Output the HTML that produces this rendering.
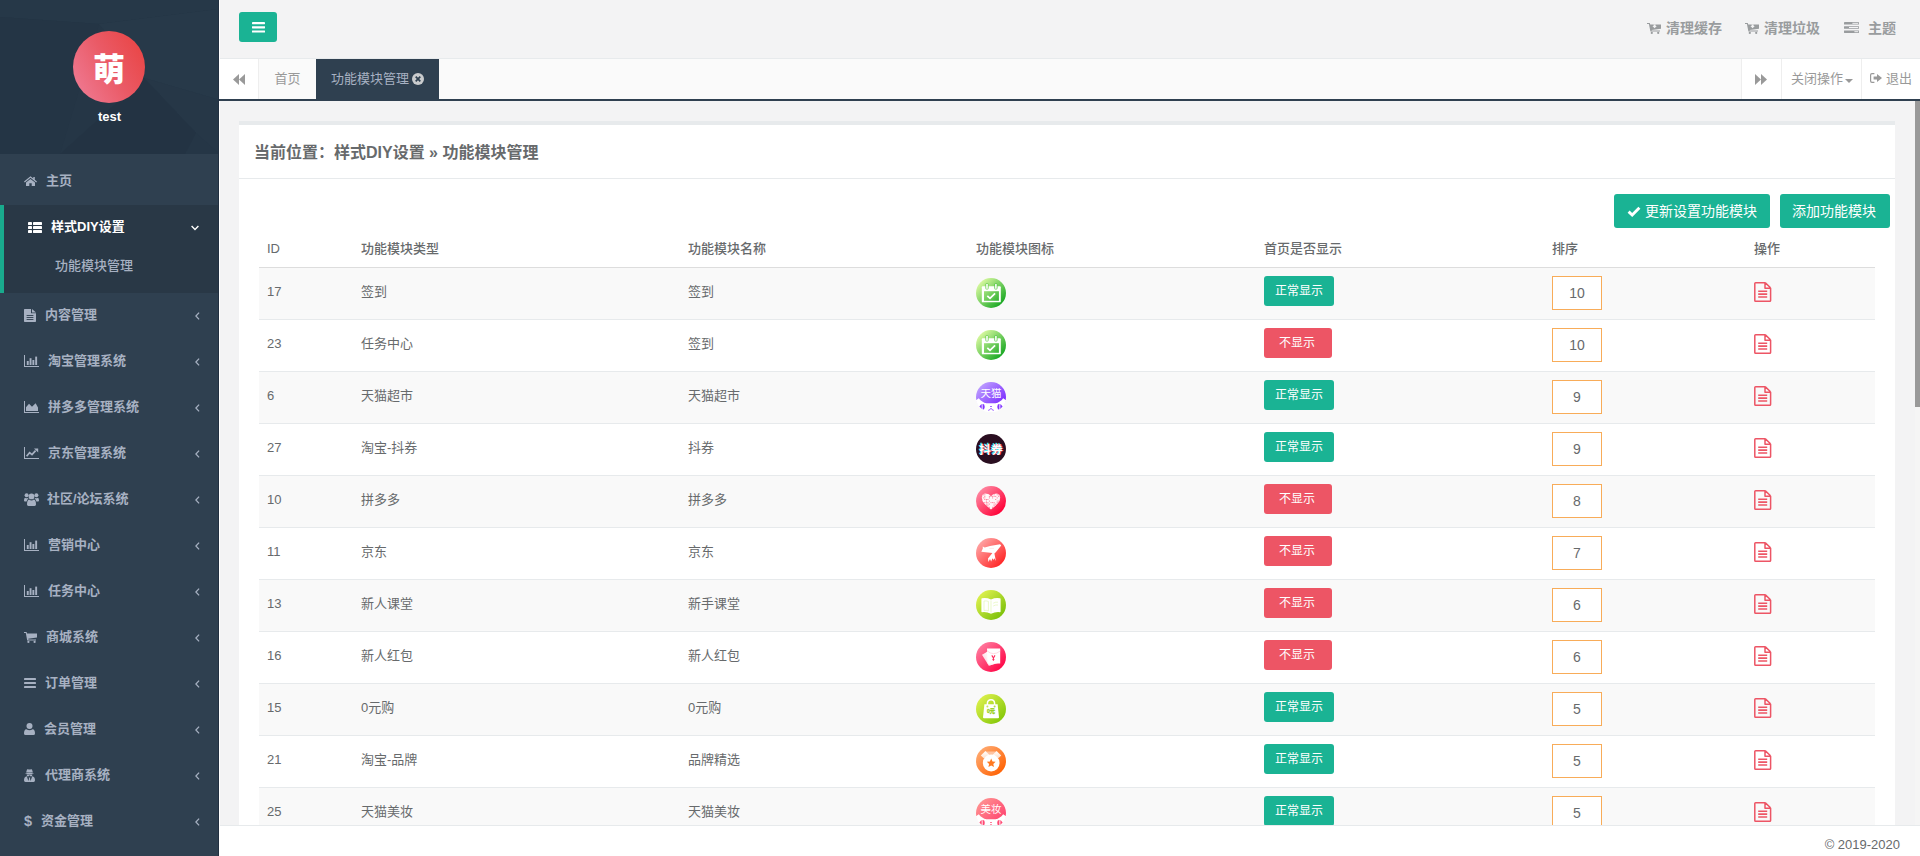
<!DOCTYPE html>
<html lang="zh-CN">
<head>
<meta charset="utf-8">
<title>功能模块管理</title>
<style>
*{box-sizing:border-box}
html,body{margin:0;padding:0}
body{width:1920px;height:856px;overflow:hidden;position:relative;background:#f3f3f4;color:#676a6c;font-family:"Liberation Sans","Noto Sans CJK SC",sans-serif;font-size:13px;line-height:1.42857}
a{color:inherit;text-decoration:none}
ul{list-style:none;margin:0;padding:0}
svg{display:block}
/* sidebar */
#side{position:absolute;left:0;top:0;width:219px;height:856px;background:#2f4050;overflow:hidden}
#side:after{content:"";position:absolute;left:218px;top:0;width:1px;height:856px;background:#223041}
#strip{position:absolute;left:219px;top:0;width:1px;height:856px;background:#fff}
#navhead{position:absolute;left:0;top:0;width:220px;height:154px;background:#253646;overflow:hidden}
#navhead svg.bg{position:absolute;left:0;top:0}
#avatar{position:absolute;left:73px;top:31px;width:72px;height:72px;border-radius:50%;background:linear-gradient(60deg,#ef7890 10%,#ea5a66 52%,#e94545 92%);color:#fff;font-weight:900;font-size:32px;line-height:72px;padding-top:3px;text-align:center}
#uname{position:absolute;left:0;top:108px;width:219px;text-align:center;color:#fff;font-weight:700;font-size:13px;line-height:18px}
#menu{position:absolute;left:0;top:159px;width:220px}
#menu li.it{height:46px;position:relative;color:#a7b1c2;font-weight:700;font-size:13px}
#menu li.it .ic{position:absolute;left:24px;top:-1px;height:46px;display:flex;align-items:center;fill:#a7b1c2}
.dl{font-size:14.5px;font-weight:700;line-height:1;font-family:"Liberation Sans",sans-serif;position:relative;top:0.5px}
#menu li.it .tx{position:absolute;top:12px;line-height:20px;white-space:nowrap}
#menu li.it .ar{position:absolute;left:194.6px;top:18.5px;stroke:#a7b1c2;fill:none}
#menu li.act{height:88px;background:#293846;border-left:4px solid #19aa8d;position:relative;color:#fff;font-weight:700}
#menu li.act .ic{position:absolute;left:24px;top:-1px;height:46px;display:flex;align-items:center;fill:#fff}
#menu li.act .tx{position:absolute;left:47px;top:12px;line-height:20px;color:#fff}
#menu li.act .ar{position:absolute;left:187px;top:19.5px;stroke:#fff;fill:none}
#menu li.act .sub{position:absolute;left:51px;top:51px;line-height:20px;color:#a7b1c2;font-weight:500}
/* top bar */
#top{position:absolute;left:220px;top:0;width:1700px;height:59px;background:#f3f3f4;border-bottom:1px solid #e7eaec}
#burger{position:absolute;left:19px;top:12px;width:38px;height:30px;background:#1ab394;border-radius:3px}
#burger svg{position:absolute;left:13px;top:9.5px}
#toplinks{position:absolute;left:0;top:0;width:1700px;height:56px}
#toplinks a{position:absolute;top:18px;line-height:20px;font-size:14px;font-weight:700;color:#999c9e;white-space:nowrap}
#toplinks svg{position:absolute;fill:#999c9e}
/* tabs */
#tabs{position:absolute;left:220px;top:59px;width:1700px;height:42px;background:#fafafa;border-bottom:2px solid #2f4050}
#tabs:before{content:"";position:absolute;left:-1px;bottom:-2px;width:1px;height:2px;background:#2f4050}
#tabs .cell{position:absolute;top:0;height:40px;line-height:40px;font-size:13px;color:#999;text-align:center;white-space:nowrap}
#tabs svg{fill:#999}
/* content */
#content{position:absolute;left:220px;top:101px;width:1695px;height:724px;overflow:hidden;background:#f3f3f4}
#strack{position:absolute;left:1915px;top:101px;width:5px;height:724px;background:#f5f5f5}
#sbar{position:absolute;left:1915px;top:101px;width:5px;height:306px;background:#999}
#ibox{position:absolute;left:19px;top:20px;width:1656px;height:760px;background:#fff;border-top:4px solid #e7eaec}
#ititle{height:54px;border-bottom:1px solid #e7eaec;padding:15px 15px 0 15px;font-size:16px;font-weight:700;line-height:26px;color:#676a6c}
#btns{position:absolute;top:69px;right:5px;height:34px}
.btn{display:inline-block;background:#1ab394;color:#fff;border-radius:3px;font-size:13px;line-height:20px;white-space:nowrap}
#tbl{position:absolute;left:20px;top:107px;width:1616px;border-collapse:collapse;table-layout:fixed}
#tbl th{height:35px;text-align:left;padding:1px 8px 0;font-weight:500;border-bottom:1px solid #ddd;vertical-align:middle;font-size:13px}
#tbl td{height:52px;padding:0 8px 1px;border-top:1px solid #e7eaec;vertical-align:middle;font-size:13px;position:relative}
#tbl tr.o td{background:#f9f9f9}
.bd{position:absolute;left:8px;top:8px;height:30px;border-radius:3px;color:#fff;font-size:12px;line-height:30px;text-align:center}
.bd.g{width:70px;background:#1ab394}
.bd.r{width:68px;background:#ed5565;padding-right:2px}
.srt{position:absolute;left:8px;top:8px;width:50px;height:34px;border:1px solid #f8ac59;background:#fff;text-align:center;font-size:14px;line-height:32px;color:#676a6c}
.doc{position:absolute;left:8px;top:14px}
.cir{position:absolute;left:8px;top:10px;width:30px;height:30px}
/* footer */
#foot{position:absolute;left:220px;top:825px;width:1700px;height:31px;background:#fff;border-top:1px solid #e7eaec;text-align:right;padding:10px 20px 0 0;font-size:13px;line-height:18px;color:#676a6c}
</style>
</head>
<body>
<div id="side">
<div id="navhead">
<svg class="bg" width="220" height="154" viewBox="0 0 220 154"><polygon points="0,17 99,24 220,9 220,0 0,0" fill="#263848"/><polygon points="99,24 220,9 220,100 144,78" fill="#273949"/><polygon points="144,78 220,100 220,154 196,133" fill="#263747"/><polygon points="144,78 196,133 185,154 60,154" fill="#233343"/><polygon points="0,17 99,24 60,154 0,154" fill="#243545"/></svg>
<div id="avatar">萌</div>
<div id="uname">test</div>
</div>
<ul id="menu">
<li class="it"><span class="ic"><svg width="13" height="10" viewBox="0 0 13 10"><path d="M6.5 0.2L0 5.6L0.8 6.5L6.5 1.8L12.2 6.5L13 5.6L10.8 3.8V0.9H9.3V2.5Z"/><path d="M6.5 2.9L2 6.6V10H5.3V7.2H7.7V10H11V6.6Z"/></svg></span><span class="tx" style="left:46px">主页</span></li>
<li class="act"><span class="ic"><svg width="14" height="11" viewBox="0 0 14 11"><rect x="0" y="0" width="4" height="3" rx=".4"/><rect x="5" y="0" width="9" height="3" rx=".4"/><rect x="0" y="4" width="4" height="3" rx=".4"/><rect x="5" y="4" width="9" height="3" rx=".4"/><rect x="0" y="8" width="4" height="3" rx=".4"/><rect x="5" y="8" width="9" height="3" rx=".4"/></svg></span><span class="tx">样式DIY设置</span><svg class="ar" width="8" height="6" viewBox="0 0 8 6"><path d="M0.6 1L4 4.4L7.4 1" stroke-width="1.4"/></svg><span class="sub">功能模块管理</span></li>
<li class="it"><span class="ic"><svg width="12" height="13" viewBox="0 0 12 13"><path d="M0.7 0H7V4.3H12V12.3Q12 13 11.3 13H0.7Q0 13 0 12.3V0.7Q0 0 0.7 0Z"/><path d="M8 0L12 3.4H8Z"/><rect x="2.6" y="6" width="6.8" height=".9" fill="#2f4050"/><rect x="2.6" y="8" width="6.8" height=".9" fill="#2f4050"/><rect x="2.6" y="10" width="6.8" height=".9" fill="#2f4050"/></svg></span><span class="tx" style="left:45px">内容管理</span><svg class="ar" width="5" height="8" viewBox="0 0 5 8"><path d="M4.1 0.6L0.9 4L4.1 7.4" stroke-width="1.25"/></svg></li>
<li class="it"><span class="ic"><svg class="bc" width="15" height="12" viewBox="0 0 15 12"><path d="M0 0H1V11H15V12H0Z"/><rect x="2.8" y="6" width="1.9" height="4"/><rect x="5.6" y="3.2" width="1.9" height="6.8"/><rect x="8.4" y="5" width="1.9" height="5"/><rect x="11.2" y="1.6" width="1.9" height="8.4"/></svg></span><span class="tx" style="left:48px">淘宝管理系统</span><svg class="ar" width="5" height="8" viewBox="0 0 5 8"><path d="M4.1 0.6L0.9 4L4.1 7.4" stroke-width="1.25"/></svg></li>
<li class="it"><span class="ic"><svg class="bc" width="15" height="12" viewBox="0 0 15 12"><path d="M0 0H1V11H15V12H0Z"/><path d="M2 10V6.3L5 2.8L8 5.8L11.6 2.2L14 6.6V10Z"/></svg></span><span class="tx" style="left:48px">拼多多管理系统</span><svg class="ar" width="5" height="8" viewBox="0 0 5 8"><path d="M4.1 0.6L0.9 4L4.1 7.4" stroke-width="1.25"/></svg></li>
<li class="it"><span class="ic"><svg class="bc" width="15" height="12" viewBox="0 0 15 12"><path d="M0 0H1V11H15V12H0Z"/><path d="M2.6 9.2L5.6 5.6L8 7.6L11.6 3.6" fill="none" stroke="#a7b1c2" stroke-width="1.7"/><path d="M10 1.4H14.2V5.6Z"/></svg></span><span class="tx" style="left:48px">京东管理系统</span><svg class="ar" width="5" height="8" viewBox="0 0 5 8"><path d="M4.1 0.6L0.9 4L4.1 7.4" stroke-width="1.25"/></svg></li>
<li class="it"><span class="ic"><svg width="15" height="13" viewBox="0 0 15 13"><circle cx="7.5" cy="3.4" r="2.9"/><path d="M3 11.6Q3 7 5.1 6.6Q7.5 8.5 9.9 6.6Q12 7 12 11.6Q12 13 10.6 13H4.4Q3 13 3 11.6Z"/><circle cx="2.6" cy="2.3" r="2"/><circle cx="12.4" cy="2.3" r="2"/><path d="M0 7.6Q0 5 1.2 4.8Q2.6 5.8 4 5L4.4 5.6Q3 6.6 2.6 8.6H0.9Q0 8.6 0 7.6Z"/><path d="M15 7.6Q15 5 13.8 4.8Q12.4 5.8 11 5L10.6 5.6Q12 6.6 12.4 8.6H14.1Q15 8.6 15 7.6Z"/></svg></span><span class="tx" style="left:47px">社区/论坛系统</span><svg class="ar" width="5" height="8" viewBox="0 0 5 8"><path d="M4.1 0.6L0.9 4L4.1 7.4" stroke-width="1.25"/></svg></li>
<li class="it"><span class="ic"><svg class="bc" width="15" height="12" viewBox="0 0 15 12"><path d="M0 0H1V11H15V12H0Z"/><rect x="2.8" y="6" width="1.9" height="4"/><rect x="5.6" y="3.2" width="1.9" height="6.8"/><rect x="8.4" y="5" width="1.9" height="5"/><rect x="11.2" y="1.6" width="1.9" height="8.4"/></svg></span><span class="tx" style="left:48px">营销中心</span><svg class="ar" width="5" height="8" viewBox="0 0 5 8"><path d="M4.1 0.6L0.9 4L4.1 7.4" stroke-width="1.25"/></svg></li>
<li class="it"><span class="ic"><svg class="bc" width="15" height="12" viewBox="0 0 15 12"><path d="M0 0H1V11H15V12H0Z"/><rect x="2.8" y="6" width="1.9" height="4"/><rect x="5.6" y="3.2" width="1.9" height="6.8"/><rect x="8.4" y="5" width="1.9" height="5"/><rect x="11.2" y="1.6" width="1.9" height="8.4"/></svg></span><span class="tx" style="left:48px">任务中心</span><svg class="ar" width="5" height="8" viewBox="0 0 5 8"><path d="M4.1 0.6L0.9 4L4.1 7.4" stroke-width="1.25"/></svg></li>
<li class="it"><span class="ic"><svg width="13" height="11" viewBox="0 0 13 11"><path d="M0 0H2.6L3 1.4H13V5.6L4.2 6.7L4.4 7.6H12V8.6H3.2L1.8 1H0Z"/><circle cx="4.4" cy="9.9" r="1.1"/><circle cx="10.6" cy="9.9" r="1.1"/></svg></span><span class="tx" style="left:46px">商城系统</span><svg class="ar" width="5" height="8" viewBox="0 0 5 8"><path d="M4.1 0.6L0.9 4L4.1 7.4" stroke-width="1.25"/></svg></li>
<li class="it"><span class="ic"><svg width="12" height="10" viewBox="0 0 12 10"><rect y="0" width="12" height="2" rx=".4"/><rect y="4" width="12" height="2" rx=".4"/><rect y="8" width="12" height="2" rx=".4"/></svg></span><span class="tx" style="left:45px">订单管理</span><svg class="ar" width="5" height="8" viewBox="0 0 5 8"><path d="M4.1 0.6L0.9 4L4.1 7.4" stroke-width="1.25"/></svg></li>
<li class="it"><span class="ic"><svg width="11" height="12" viewBox="0 0 11 12"><circle cx="5.5" cy="3" r="3"/><path d="M0 10.4Q0 6.6 2.4 6.3Q5.5 8.4 8.6 6.3Q11 6.6 11 10.4Q11 12 9.4 12H1.6Q0 12 0 10.4Z"/></svg></span><span class="tx" style="left:44px">会员管理</span><svg class="ar" width="5" height="8" viewBox="0 0 5 8"><path d="M4.1 0.6L0.9 4L4.1 7.4" stroke-width="1.25"/></svg></li>
<li class="it"><span class="ic"><svg width="11" height="13" viewBox="0 0 11 13"><path d="M3 0.6Q3.4 0 4 0.3Q5.5 0.9 7 0.3Q7.6 0 8 0.6L8.9 3.4H2.1Z"/><path d="M0.8 4.6Q5.5 3 10.2 4.6Q5.5 5.9 0.8 4.6Z"/><path d="M2.6 5.6H8.4Q8.2 7.6 7.2 7.6Q6.2 7.6 5.9 6.6H5.1Q4.8 7.6 3.8 7.6Q2.8 7.6 2.6 5.6Z"/><path d="M2.8 7.2L4.4 12L5 9.4L4.7 8.6H6.3L6 9.4L6.6 12L8.2 7.2Q11 7.8 11 11.2Q11 13 9.6 13H1.4Q0 13 0 11.2Q0 7.8 2.8 7.2Z"/></svg></span><span class="tx" style="left:45px">代理商系统</span><svg class="ar" width="5" height="8" viewBox="0 0 5 8"><path d="M4.1 0.6L0.9 4L4.1 7.4" stroke-width="1.25"/></svg></li>
<li class="it"><span class="ic"><span class="dl">$</span></span><span class="tx" style="left:41px">资金管理</span><svg class="ar" width="5" height="8" viewBox="0 0 5 8"><path d="M4.1 0.6L0.9 4L4.1 7.4" stroke-width="1.25"/></svg></li>
</ul>
</div>

<div id="strip"></div>
<div id="top">
<a id="burger"><svg width="13" height="11" viewBox="0 0 13 11" fill="#fff"><rect y="0" width="13" height="2.2" rx=".4"/><rect y="4.2" width="13" height="2.2" rx=".4"/><rect y="8.4" width="13" height="2.2" rx=".4"/></svg></a>
<div id="toplinks">
<svg width="14" height="11" viewBox="0 0 14 11" style="left:1427px;top:23px"><path d="M0 0H2.8L3.2 1.4H14V5.8L4.6 6.9L4.8 7.6H13V8.6H3.4L1.9 1H0Z"/><path d="M6.6 1.4V3H5.4L7.6 5.2L9.8 3H8.6V1.4Z" fill="#f3f3f4"/><circle cx="4.8" cy="9.9" r="1.1"/><circle cx="11.2" cy="9.9" r="1.1"/></svg><a style="left:1446px">清理缓存</a>
<svg width="14" height="11" viewBox="0 0 14 11" style="left:1525px;top:23px"><path d="M0 0H2.8L3.2 1.4H14V5.8L4.6 6.9L4.8 7.6H13V8.6H3.4L1.9 1H0Z"/><path d="M6.6 1.4V3H5.4L7.6 5.2L9.8 3H8.6V1.4Z" fill="#f3f3f4"/><circle cx="4.8" cy="9.9" r="1.1"/><circle cx="11.2" cy="9.9" r="1.1"/></svg><a style="left:1544px">清理垃圾</a>
<svg width="15" height="11" viewBox="0 0 15 11" style="left:1624px;top:22px"><rect x="0" y="0" width="15" height="2.6" rx=".4"/><rect x="0" y="4.2" width="15" height="2.6" rx=".4"/><rect x="0" y="8.4" width="15" height="2.6" rx=".4"/><rect x="8.4" y=".8" width="5.8" height="1" fill="#f3f3f4"/><rect x="5" y="5" width="9.2" height="1" fill="#f3f3f4"/><rect x="10.4" y="9.2" width="3.8" height="1" fill="#f3f3f4"/></svg><a style="left:1648px">主题</a>
</div>
</div>

<div id="tabs">
<div class="cell" style="left:0;width:39px;background:#fff;border-right:1px solid #eee"><svg width="12" height="11" viewBox="0 0 12 11" style="position:absolute;left:13px;top:15px"><path d="M6 0V11L0 5.5Z"/><path d="M12 0V11L6 5.5Z"/></svg></div>
<div class="cell" style="left:39px;width:57px;background:#fafafa">首页</div>
<div class="cell" style="left:96px;width:123px;background:#2f4050;color:#a7b1c2;text-align:left;padding-left:15px">功能模块管理<svg width="12" height="12" viewBox="0 0 12 12" style="position:absolute;left:96px;top:14px"><circle cx="6" cy="6" r="6" fill="#c9cbcd"/><path d="M3.7 3.7L8.3 8.3M8.3 3.7L3.7 8.3" stroke="#2f4050" stroke-width="1.7"/></svg></div>
<div class="cell" style="left:1521px;width:40px;background:#fff;border-left:1px solid #eee"><svg width="12" height="11" viewBox="0 0 12 11" style="position:absolute;left:13px;top:15px"><path d="M0 0V11L6 5.5Z"/><path d="M6 0V11L12 5.5Z"/></svg></div>
<div class="cell" style="left:1561px;width:80px;background:#fff;border-left:1px solid #eee;text-align:left;padding-left:9px">关闭操作<svg width="8" height="4" viewBox="0 0 8 4" style="position:absolute;left:63px;top:20px"><path d="M0 0H8L4 4Z"/></svg></div>
<div class="cell" style="left:1641px;width:59px;background:#fff;border-left:1px solid #eee;text-align:left;padding-left:24px"><svg width="12" height="10" viewBox="0 0 12 10" style="position:absolute;left:8px;top:14px"><path d="M4.4 0H2Q0 0 0 2V8Q0 10 2 10H4.4V8.8H2Q1.2 8.8 1.2 8V2Q1.2 1.2 2 1.2H4.4Z"/><path d="M3.6 3.4H7V1L12 5L7 9V6.6H3.6Z"/></svg>退出</div>
</div>

<div id="content">
<div id="ibox">
<div id="ititle">当前位置：样式DIY设置 » 功能模块管理</div>
<div id="btns"><a class="btn" style="position:absolute;right:120px;top:0;width:156px;height:34px;padding:7px 0 0 13px;font-size:14px"><svg width="14" height="11" viewBox="0 0 14 11" style="display:inline-block;vertical-align:-1px;margin-right:4px"><path d="M1.6 5.6L5.2 9L12.4 1.8" fill="none" stroke="#fff" stroke-width="2.9"/></svg>更新设置功能模块</a><a class="btn" style="position:absolute;right:0;top:0;width:110px;height:34px;padding:7px 0 0 12px;font-size:14px">添加功能模块</a></div>
<table id="tbl">
<colgroup><col style="width:94px"><col style="width:327px"><col style="width:288px"><col style="width:288px"><col style="width:288px"><col style="width:202px"><col style="width:129px"></colgroup>
<thead><tr><th style="font-weight:400">ID</th><th>功能模块类型</th><th>功能模块名称</th><th>功能模块图标</th><th>首页是否显示</th><th>排序</th><th>操作</th></tr></thead>
<tbody>
<tr class="o"><td>17</td><td>签到</td><td>签到</td><td><svg class="cir" width="30" height="30" viewBox="0 0 30 30"><defs><linearGradient id="g1" gradientUnits="userSpaceOnUse" x1="4" y1="4" x2="26" y2="26"><stop offset="0" stop-color="#d9f9a0"/><stop offset="1" stop-color="#17a722"/></linearGradient></defs><circle cx="15" cy="15" r="15" fill="url(#g1)"/><path d="M6.6 8.3H23.9Q24.8 8.3 24.8 9.2V23.4Q24.8 24.3 23.9 24.3H6.6Q5.8 24.3 5.8 23.4V9.2Q5.8 8.3 6.6 8.3Z" fill="#fff"/><rect x="8" y="13.2" width="14.9" height="9.6" fill="url(#g1)"/><rect x="9.4" y="5" width="3.2" height="6.6" rx="1.6" fill="#6fcf52"/><rect x="18.3" y="5" width="3.2" height="6.6" rx="1.6" fill="#5cc94a"/><rect x="10.2" y="5.7" width="1.6" height="5.3" rx=".8" fill="#fff"/><rect x="19.1" y="5.7" width="1.6" height="5.3" rx=".8" fill="#fff"/><path d="M11.3 17.8L14 20.4L19.1 15.3" fill="none" stroke="#fff" stroke-width="1.7"/></svg></td><td><span class="bd g">正常显示</span></td><td><span class="srt">10</span></td><td><svg class="doc" width="18" height="20" viewBox="0 0 18 20"><path d="M1.6 0.8H11V6.2H16.6V18.4Q16.6 19.2 15.8 19.2H1.6Q0.8 19.2 0.8 18.4V1.6Q0.8 0.8 1.6 0.8ZM11.4 0.9L16.5 5.8" fill="none" stroke="#ed5565" stroke-width="1.5" stroke-linejoin="round"/><path d="M4.2 9.2H13.2M4.2 12.1H13.2M4.2 15H13.2" stroke="#ed5565" stroke-width="1.6"/></svg></td></tr>
<tr><td>23</td><td>任务中心</td><td>签到</td><td><svg class="cir" width="30" height="30" viewBox="0 0 30 30"><defs><linearGradient id="g2" gradientUnits="userSpaceOnUse" x1="4" y1="4" x2="26" y2="26"><stop offset="0" stop-color="#d9f9a0"/><stop offset="1" stop-color="#17a722"/></linearGradient></defs><circle cx="15" cy="15" r="15" fill="url(#g2)"/><path d="M6.6 8.3H23.9Q24.8 8.3 24.8 9.2V23.4Q24.8 24.3 23.9 24.3H6.6Q5.8 24.3 5.8 23.4V9.2Q5.8 8.3 6.6 8.3Z" fill="#fff"/><rect x="8" y="13.2" width="14.9" height="9.6" fill="url(#g2)"/><rect x="9.4" y="5" width="3.2" height="6.6" rx="1.6" fill="#6fcf52"/><rect x="18.3" y="5" width="3.2" height="6.6" rx="1.6" fill="#5cc94a"/><rect x="10.2" y="5.7" width="1.6" height="5.3" rx=".8" fill="#fff"/><rect x="19.1" y="5.7" width="1.6" height="5.3" rx=".8" fill="#fff"/><path d="M11.3 17.8L14 20.4L19.1 15.3" fill="none" stroke="#fff" stroke-width="1.7"/></svg></td><td><span class="bd r">不显示</span></td><td><span class="srt">10</span></td><td><svg class="doc" width="18" height="20" viewBox="0 0 18 20"><path d="M1.6 0.8H11V6.2H16.6V18.4Q16.6 19.2 15.8 19.2H1.6Q0.8 19.2 0.8 18.4V1.6Q0.8 0.8 1.6 0.8ZM11.4 0.9L16.5 5.8" fill="none" stroke="#ed5565" stroke-width="1.5" stroke-linejoin="round"/><path d="M4.2 9.2H13.2M4.2 12.1H13.2M4.2 15H13.2" stroke="#ed5565" stroke-width="1.6"/></svg></td></tr>
<tr class="o"><td>6</td><td>天猫超市</td><td>天猫超市</td><td><svg class="cir" width="30" height="30" viewBox="0 0 30 30"><defs><linearGradient id="g3" gradientUnits="userSpaceOnUse" x1="4" y1="4" x2="26" y2="26"><stop offset="0" stop-color="#bb9cff"/><stop offset="1" stop-color="#7622ff"/></linearGradient></defs><circle cx="15" cy="15" r="15" fill="url(#g3)"/><clipPath id="cp3"><circle cx="15" cy="15" r="15.5"/></clipPath><path clip-path="url(#cp3)" d="M-1 19L2.8 16.2Q6 20.4 10.5 21.2H19.5Q24 20.4 27.2 16.2L31 19V31H-1Z" fill="#fff"/><path d="M3.4 24.4Q5.6 21.2 8.2 22.4Q9.4 25 8 27.6Q5.6 27.4 3.4 24.4Z" fill="#8236ff"/><path d="M26.6 24.4Q24.4 21.2 21.8 22.4Q20.6 25 22 27.6Q24.4 27.4 26.6 24.4Z" fill="#8236ff"/><rect x="5.7" y="22.2" width=".9" height="5.4" fill="#fff"/><rect x="23.4" y="22.2" width=".9" height="5.4" fill="#fff"/><rect x="14.2" y="24" width="1.6" height=".9" fill="#8236ff"/><path d="M12.2 28.4Q14 28.2 15 26.2Q16 28.2 17.8 28.4" fill="none" stroke="#8236ff" stroke-width=".8"/><text x="15" y="14.7" text-anchor="middle" font-size="10.5" fill="#fff" font-weight="400" font-family="Liberation Sans,Noto Sans CJK SC,sans-serif">天猫</text></svg></td><td><span class="bd g">正常显示</span></td><td><span class="srt">9</span></td><td><svg class="doc" width="18" height="20" viewBox="0 0 18 20"><path d="M1.6 0.8H11V6.2H16.6V18.4Q16.6 19.2 15.8 19.2H1.6Q0.8 19.2 0.8 18.4V1.6Q0.8 0.8 1.6 0.8ZM11.4 0.9L16.5 5.8" fill="none" stroke="#ed5565" stroke-width="1.5" stroke-linejoin="round"/><path d="M4.2 9.2H13.2M4.2 12.1H13.2M4.2 15H13.2" stroke="#ed5565" stroke-width="1.6"/></svg></td></tr>
<tr><td>27</td><td>淘宝-抖券</td><td>抖券</td><td><svg class="cir" width="30" height="30" viewBox="0 0 30 30"><circle cx="15" cy="15" r="15" fill="#2a0e20"/><g font-size="11.8" font-weight="700" text-anchor="middle" font-family="Liberation Sans,Noto Sans CJK SC,sans-serif"><text x="14.3" y="19.2" fill="#3ff0f0">抖券</text><text x="15.7" y="20.4" fill="#ff2d55">抖券</text><text x="15" y="19.8" fill="#fff">抖券</text></g></svg></td><td><span class="bd g">正常显示</span></td><td><span class="srt">9</span></td><td><svg class="doc" width="18" height="20" viewBox="0 0 18 20"><path d="M1.6 0.8H11V6.2H16.6V18.4Q16.6 19.2 15.8 19.2H1.6Q0.8 19.2 0.8 18.4V1.6Q0.8 0.8 1.6 0.8ZM11.4 0.9L16.5 5.8" fill="none" stroke="#ed5565" stroke-width="1.5" stroke-linejoin="round"/><path d="M4.2 9.2H13.2M4.2 12.1H13.2M4.2 15H13.2" stroke="#ed5565" stroke-width="1.6"/></svg></td></tr>
<tr class="o"><td>10</td><td>拼多多</td><td>拼多多</td><td><svg class="cir" width="30" height="30" viewBox="0 0 30 30"><defs><linearGradient id="g5" gradientUnits="userSpaceOnUse" x1="4" y1="4" x2="26" y2="26"><stop offset="0" stop-color="#ff86a0"/><stop offset="1" stop-color="#ff0036"/></linearGradient></defs><circle cx="15" cy="15" r="15" fill="url(#g5)"/><clipPath id="cp5"><path d="M15 23.4Q5.8 17.2 5.8 11.8Q5.8 7.4 10 7.4Q13.2 7.4 15 10.2Q16.8 7.4 20 7.4Q24.2 7.4 24.2 11.8Q24.2 17.2 15 23.4Z"/></clipPath><g clip-path="url(#cp5)"><rect x="5" y="6" width="20" height="18" fill="#fff" opacity=".96"/><g fill="#ff2d58" opacity=".6"><rect x="5.2" y="6.8" width="1" height="1"/><rect x="6.8" y="6.8" width="1" height="1"/><rect x="9.9" y="6.8" width="1" height="1"/><rect x="11.4" y="6.8" width="1" height="1"/><rect x="12.9" y="6.8" width="1" height="1"/><rect x="14.5" y="6.8" width="1" height="1"/><rect x="16.1" y="6.8" width="1" height="1"/><rect x="17.6" y="6.8" width="1" height="1"/><rect x="19.2" y="6.8" width="1" height="1"/><rect x="20.7" y="6.8" width="1" height="1"/><rect x="22.2" y="6.8" width="1" height="1"/><rect x="23.8" y="6.8" width="1" height="1"/><rect x="6.8" y="8.3" width="1" height="1"/><rect x="8.3" y="8.3" width="1" height="1"/><rect x="14.5" y="8.3" width="1" height="1"/><rect x="17.6" y="8.3" width="1" height="1"/><rect x="20.7" y="8.3" width="1" height="1"/><rect x="22.2" y="8.3" width="1" height="1"/><rect x="23.8" y="8.3" width="1" height="1"/><rect x="5.2" y="9.9" width="1" height="1"/><rect x="8.3" y="9.9" width="1" height="1"/><rect x="12.9" y="9.9" width="1" height="1"/><rect x="14.5" y="9.9" width="1" height="1"/><rect x="16.1" y="9.9" width="1" height="1"/><rect x="17.6" y="9.9" width="1" height="1"/><rect x="19.2" y="9.9" width="1" height="1"/><rect x="22.2" y="9.9" width="1" height="1"/><rect x="23.8" y="9.9" width="1" height="1"/><rect x="6.8" y="11.4" width="1" height="1"/><rect x="8.3" y="11.4" width="1" height="1"/><rect x="12.9" y="11.4" width="1" height="1"/><rect x="16.1" y="11.4" width="1" height="1"/><rect x="20.7" y="11.4" width="1" height="1"/><rect x="23.8" y="11.4" width="1" height="1"/><rect x="5.2" y="13.0" width="1" height="1"/><rect x="8.3" y="13.0" width="1" height="1"/><rect x="9.9" y="13.0" width="1" height="1"/><rect x="11.4" y="13.0" width="1" height="1"/><rect x="19.2" y="13.0" width="1" height="1"/><rect x="5.2" y="14.6" width="1" height="1"/><rect x="9.9" y="14.6" width="1" height="1"/><rect x="12.9" y="14.6" width="1" height="1"/><rect x="20.7" y="14.6" width="1" height="1"/><rect x="22.2" y="14.6" width="1" height="1"/><rect x="5.2" y="16.1" width="1" height="1"/><rect x="6.8" y="16.1" width="1" height="1"/><rect x="8.3" y="16.1" width="1" height="1"/><rect x="9.9" y="16.1" width="1" height="1"/><rect x="11.4" y="16.1" width="1" height="1"/><rect x="14.5" y="16.1" width="1" height="1"/><rect x="16.1" y="16.1" width="1" height="1"/><rect x="17.6" y="16.1" width="1" height="1"/><rect x="20.7" y="16.1" width="1" height="1"/><rect x="22.2" y="16.1" width="1" height="1"/><rect x="23.8" y="16.1" width="1" height="1"/><rect x="9.9" y="17.6" width="1" height="1"/><rect x="11.4" y="17.6" width="1" height="1"/><rect x="12.9" y="17.6" width="1" height="1"/><rect x="17.6" y="17.6" width="1" height="1"/><rect x="19.2" y="17.6" width="1" height="1"/><rect x="20.7" y="17.6" width="1" height="1"/><rect x="22.2" y="17.6" width="1" height="1"/><rect x="23.8" y="17.6" width="1" height="1"/><rect x="6.8" y="19.2" width="1" height="1"/><rect x="8.3" y="19.2" width="1" height="1"/><rect x="9.9" y="19.2" width="1" height="1"/><rect x="11.4" y="19.2" width="1" height="1"/><rect x="17.6" y="19.2" width="1" height="1"/><rect x="22.2" y="19.2" width="1" height="1"/><rect x="9.9" y="20.8" width="1" height="1"/><rect x="11.4" y="20.8" width="1" height="1"/><rect x="12.9" y="20.8" width="1" height="1"/><rect x="16.1" y="20.8" width="1" height="1"/><rect x="17.6" y="20.8" width="1" height="1"/><rect x="19.2" y="20.8" width="1" height="1"/><rect x="20.7" y="20.8" width="1" height="1"/><rect x="22.2" y="20.8" width="1" height="1"/><rect x="23.8" y="20.8" width="1" height="1"/><rect x="5.2" y="22.3" width="1" height="1"/><rect x="6.8" y="22.3" width="1" height="1"/><rect x="8.3" y="22.3" width="1" height="1"/><rect x="9.9" y="22.3" width="1" height="1"/><rect x="11.4" y="22.3" width="1" height="1"/><rect x="16.1" y="22.3" width="1" height="1"/><rect x="17.6" y="22.3" width="1" height="1"/><rect x="19.2" y="22.3" width="1" height="1"/><rect x="20.7" y="22.3" width="1" height="1"/><rect x="22.2" y="22.3" width="1" height="1"/></g></g></svg></td><td><span class="bd r">不显示</span></td><td><span class="srt">8</span></td><td><svg class="doc" width="18" height="20" viewBox="0 0 18 20"><path d="M1.6 0.8H11V6.2H16.6V18.4Q16.6 19.2 15.8 19.2H1.6Q0.8 19.2 0.8 18.4V1.6Q0.8 0.8 1.6 0.8ZM11.4 0.9L16.5 5.8" fill="none" stroke="#ed5565" stroke-width="1.5" stroke-linejoin="round"/><path d="M4.2 9.2H13.2M4.2 12.1H13.2M4.2 15H13.2" stroke="#ed5565" stroke-width="1.6"/></svg></td></tr>
<tr><td>11</td><td>京东</td><td>京东</td><td><svg class="cir" width="30" height="30" viewBox="0 0 30 30"><defs><linearGradient id="g6" gradientUnits="userSpaceOnUse" x1="4" y1="4" x2="26" y2="26"><stop offset="0" stop-color="#ffa3a3"/><stop offset="1" stop-color="#ff2626"/></linearGradient></defs><circle cx="15" cy="15" r="15" fill="url(#g6)"/><path d="M6.7 8.5L8.7 9.5L14 8L24 6.3L25.2 7.5L19.8 14.2L18.4 15.6L19.9 23L18.4 20.2L17.4 22L16.4 20.2L15.2 23.6L14 21L12.4 24L12 20.4L16.4 14.9L5.3 13.8L6.8 10.6Z" fill="#fff"/><path d="M13.2 10.4H18" stroke="#ffd2d2" stroke-width=".5"/></svg></td><td><span class="bd r">不显示</span></td><td><span class="srt">7</span></td><td><svg class="doc" width="18" height="20" viewBox="0 0 18 20"><path d="M1.6 0.8H11V6.2H16.6V18.4Q16.6 19.2 15.8 19.2H1.6Q0.8 19.2 0.8 18.4V1.6Q0.8 0.8 1.6 0.8ZM11.4 0.9L16.5 5.8" fill="none" stroke="#ed5565" stroke-width="1.5" stroke-linejoin="round"/><path d="M4.2 9.2H13.2M4.2 12.1H13.2M4.2 15H13.2" stroke="#ed5565" stroke-width="1.6"/></svg></td></tr>
<tr class="o"><td>13</td><td>新人课堂</td><td>新手课堂</td><td><svg class="cir" width="30" height="30" viewBox="0 0 30 30"><defs><linearGradient id="g7" gradientUnits="userSpaceOnUse" x1="4" y1="4" x2="26" y2="26"><stop offset="0" stop-color="#dcf04e"/><stop offset="1" stop-color="#7dc10a"/></linearGradient></defs><circle cx="15" cy="15" r="15" fill="url(#g7)"/><path d="M6 8.2Q10.6 7.4 15 9.4Q19.4 7.4 24 8.2Q24.6 8.3 24.6 9V21.4Q24.6 22.2 24 22.2Q19.4 21.6 15 23.8Q10.6 21.6 6 22.2Q5.4 22.2 5.4 21.4V9Q5.4 8.3 6 8.2Z" fill="#fff"/><path d="M15 10.4V22.6M8 11V20.4Q10.6 20 12.4 21V11.4Q10.4 10.6 8 11ZM17.2 13.2Q19.6 11.8 22 12.2M17.2 16Q19.6 14.6 22 15" fill="none" stroke="#e3f6b4" stroke-width=".7"/></svg></td><td><span class="bd r">不显示</span></td><td><span class="srt">6</span></td><td><svg class="doc" width="18" height="20" viewBox="0 0 18 20"><path d="M1.6 0.8H11V6.2H16.6V18.4Q16.6 19.2 15.8 19.2H1.6Q0.8 19.2 0.8 18.4V1.6Q0.8 0.8 1.6 0.8ZM11.4 0.9L16.5 5.8" fill="none" stroke="#ed5565" stroke-width="1.5" stroke-linejoin="round"/><path d="M4.2 9.2H13.2M4.2 12.1H13.2M4.2 15H13.2" stroke="#ed5565" stroke-width="1.6"/></svg></td></tr>
<tr><td>16</td><td>新人红包</td><td>新人红包</td><td><svg class="cir" width="30" height="30" viewBox="0 0 30 30"><defs><linearGradient id="g8" gradientUnits="userSpaceOnUse" x1="4" y1="4" x2="26" y2="26"><stop offset="0" stop-color="#ff789c"/><stop offset="1" stop-color="#ff0848"/></linearGradient></defs><circle cx="15" cy="15" r="15" fill="url(#g8)"/><path d="M6 12.8L10.6 10.2L18 22L12.8 23.8Z" fill="#ffe4ec"/><path d="M8.4 12L12 8.8L22 21L13.6 23.4Z" fill="#fff0f4"/><path d="M11 6.4H24.2V21.4H11.6Z" fill="#fff"/><path d="M11 8.8Q17.4 14.4 24.2 9" fill="none" stroke="#ffd0dc" stroke-width=".8"/><path d="M15.8 13.4L17.4 16L19 13.4M17.4 16V18.4" fill="none" stroke="#ff2a5c" stroke-width="1.1"/><path d="M16 17.2L17.4 18.8L18.8 17.2Z" fill="#ff2a5c"/></svg></td><td><span class="bd r">不显示</span></td><td><span class="srt">6</span></td><td><svg class="doc" width="18" height="20" viewBox="0 0 18 20"><path d="M1.6 0.8H11V6.2H16.6V18.4Q16.6 19.2 15.8 19.2H1.6Q0.8 19.2 0.8 18.4V1.6Q0.8 0.8 1.6 0.8ZM11.4 0.9L16.5 5.8" fill="none" stroke="#ed5565" stroke-width="1.5" stroke-linejoin="round"/><path d="M4.2 9.2H13.2M4.2 12.1H13.2M4.2 15H13.2" stroke="#ed5565" stroke-width="1.6"/></svg></td></tr>
<tr class="o"><td>15</td><td>0元购</td><td>0元购</td><td><svg class="cir" width="30" height="30" viewBox="0 0 30 30"><defs><linearGradient id="g9" gradientUnits="userSpaceOnUse" x1="4" y1="4" x2="26" y2="26"><stop offset="0" stop-color="#daef4a"/><stop offset="1" stop-color="#86c80a"/></linearGradient></defs><circle cx="15" cy="15" r="15" fill="url(#g9)"/><path d="M11.4 11.4V9.6Q11.4 5.8 15 5.8Q18.6 5.8 18.6 9.6V11.4" fill="none" stroke="#fff" stroke-width="1.5"/><path d="M8.4 10.2H21.6L23 23.2Q23 24.2 22 24.2H8Q7 24.2 7 23.2Z" fill="#fff"/><circle cx="11.4" cy="12.4" r="1" fill="#c5e85a"/><circle cx="18.6" cy="12.4" r="1" fill="#b4df3c"/><text x="15" y="19.4" text-anchor="middle" font-size="5.2" font-weight="900" fill="#98d020" stroke="#98d020" stroke-width=".3" font-family="Liberation Sans,Noto Sans CJK SC,sans-serif">0元</text></svg></td><td><span class="bd g">正常显示</span></td><td><span class="srt">5</span></td><td><svg class="doc" width="18" height="20" viewBox="0 0 18 20"><path d="M1.6 0.8H11V6.2H16.6V18.4Q16.6 19.2 15.8 19.2H1.6Q0.8 19.2 0.8 18.4V1.6Q0.8 0.8 1.6 0.8ZM11.4 0.9L16.5 5.8" fill="none" stroke="#ed5565" stroke-width="1.5" stroke-linejoin="round"/><path d="M4.2 9.2H13.2M4.2 12.1H13.2M4.2 15H13.2" stroke="#ed5565" stroke-width="1.6"/></svg></td></tr>
<tr><td>21</td><td>淘宝-品牌</td><td>品牌精选</td><td><svg class="cir" width="30" height="30" viewBox="0 0 30 30"><defs><linearGradient id="g10" gradientUnits="userSpaceOnUse" x1="4" y1="4" x2="26" y2="26"><stop offset="0" stop-color="#ffa86e"/><stop offset="1" stop-color="#ff6305"/></linearGradient></defs><circle cx="15" cy="15" r="15" fill="url(#g10)"/><defs><linearGradient id="r10" x1="0" y1="0" x2="0" y2="1"><stop offset="0" stop-color="#fff"/><stop offset="1" stop-color="#fff" stop-opacity=".7"/></linearGradient></defs><path d="M9.6 5.4H20.4L17.4 9.4H12.6Z" fill="#ffc3a0"/><path d="M4.8 9.4L9.4 5L14 9.6L8 12.6Z" fill="url(#r10)"/><path d="M25.2 9.4L20.6 5L16 9.6L22 12.6Z" fill="url(#r10)"/><circle cx="15.2" cy="17" r="8.4" fill="#fff"/><path d="M15.2 12.6L16.5 15.5L19.6 15.8L17.3 17.9L18 21L15.2 19.4L12.4 21L13.1 17.9L10.8 15.8L13.9 15.5Z" fill="#ff7a22"/></svg></td><td><span class="bd g">正常显示</span></td><td><span class="srt">5</span></td><td><svg class="doc" width="18" height="20" viewBox="0 0 18 20"><path d="M1.6 0.8H11V6.2H16.6V18.4Q16.6 19.2 15.8 19.2H1.6Q0.8 19.2 0.8 18.4V1.6Q0.8 0.8 1.6 0.8ZM11.4 0.9L16.5 5.8" fill="none" stroke="#ed5565" stroke-width="1.5" stroke-linejoin="round"/><path d="M4.2 9.2H13.2M4.2 12.1H13.2M4.2 15H13.2" stroke="#ed5565" stroke-width="1.6"/></svg></td></tr>
<tr class="o"><td>25</td><td>天猫美妆</td><td>天猫美妆</td><td><svg class="cir" width="30" height="30" viewBox="0 0 30 30"><defs><linearGradient id="g11" gradientUnits="userSpaceOnUse" x1="4" y1="4" x2="26" y2="26"><stop offset="0" stop-color="#ff9090"/><stop offset="1" stop-color="#ff3e6e"/></linearGradient></defs><circle cx="15" cy="15" r="15" fill="url(#g11)"/><clipPath id="cp11"><circle cx="15" cy="15" r="15.5"/></clipPath><path clip-path="url(#cp11)" d="M-1 19L2.8 16.2Q6 20.4 10.5 21.2H19.5Q24 20.4 27.2 16.2L31 19V31H-1Z" fill="#fff"/><path d="M3.4 24.4Q5.6 21.2 8.2 22.4Q9.4 25 8 27.6Q5.6 27.4 3.4 24.4Z" fill="#ff4a74"/><path d="M26.6 24.4Q24.4 21.2 21.8 22.4Q20.6 25 22 27.6Q24.4 27.4 26.6 24.4Z" fill="#ff4a74"/><rect x="5.7" y="22.2" width=".9" height="5.4" fill="#fff"/><rect x="23.4" y="22.2" width=".9" height="5.4" fill="#fff"/><rect x="14.2" y="24" width="1.6" height=".9" fill="#ff4a74"/><path d="M12.2 28.4Q14 28.2 15 26.2Q16 28.2 17.8 28.4" fill="none" stroke="#ff4a74" stroke-width=".8"/><text x="15" y="14.7" text-anchor="middle" font-size="10.5" fill="#fff" font-weight="400" font-family="Liberation Sans,Noto Sans CJK SC,sans-serif">美妆</text></svg></td><td><span class="bd g">正常显示</span></td><td><span class="srt">5</span></td><td><svg class="doc" width="18" height="20" viewBox="0 0 18 20"><path d="M1.6 0.8H11V6.2H16.6V18.4Q16.6 19.2 15.8 19.2H1.6Q0.8 19.2 0.8 18.4V1.6Q0.8 0.8 1.6 0.8ZM11.4 0.9L16.5 5.8" fill="none" stroke="#ed5565" stroke-width="1.5" stroke-linejoin="round"/><path d="M4.2 9.2H13.2M4.2 12.1H13.2M4.2 15H13.2" stroke="#ed5565" stroke-width="1.6"/></svg></td></tr>
</tbody>
</table>
</div>
</div>
<div id="strack"></div>
<div id="sbar"></div>

<div id="foot">© 2019-2020</div>

</body>
</html>
